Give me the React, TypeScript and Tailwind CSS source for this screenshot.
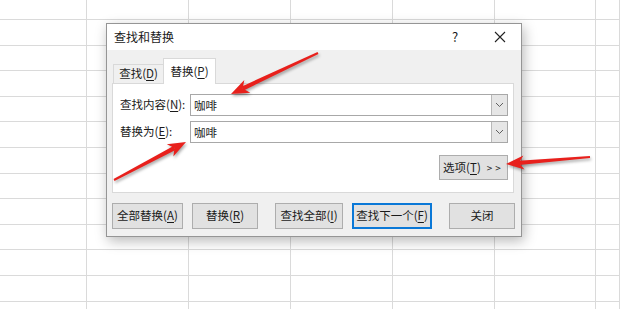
import type { ReactNode } from "react";

const FONT = { fontFamily: '"Noto Sans CJK SC", "Noto Sans", sans-serif' };

function Key({ k }: { k: string }) {
  return (
    <>
      (<span className="underline underline-offset-2">{k}</span>)
    </>
  );
}

function Arrow({ from, to }: { from: [number, number]; to: [number, number] }) {
  const dx = to[0] - from[0];
  const dy = to[1] - from[1];
  const len = Math.hypot(dx, dy);
  const ux = dx / len;
  const uy = dy / len;
  const nx = -uy;
  const ny = ux;
  const back = 18;
  const half = 7;
  const notch = 13;
  const bx = to[0] - back * ux;
  const by = to[1] - back * uy;
  const head = [
    [to[0], to[1]],
    [bx + half * nx, by + half * ny],
    [to[0] - notch * ux, to[1] - notch * uy],
    [bx - half * nx, by - half * ny],
  ]
    .map((p) => p.join(","))
    .join(" ");
  const sx = to[0] - notch * ux;
  const sy = to[1] - notch * uy;
  // tapered shaft: thin at the tail, thicker near the head
  const shaft = [
    [from[0] + 1 * nx, from[1] + 1 * ny],
    [sx + 2.2 * nx, sy + 2.2 * ny],
    [sx - 2.2 * nx, sy - 2.2 * ny],
    [from[0] - 1 * nx, from[1] - 1 * ny],
  ]
    .map((p) => p.join(","))
    .join(" ");
  return (
    <g fill="#e8201c" style={{ filter: "drop-shadow(1px 2px 1.5px rgba(0,0,0,0.35))" }}>
      <polygon points={shaft} />
      <polygon points={head} />
    </g>
  );
}

function Btn({ children, w, focus }: { children: ReactNode; w: string; focus?: boolean }) {
  return (
    <div
      className={
        "h-[26px] flex items-center justify-center bg-[#e1e1e1] text-[11.5px] text-[#1a1a1a] " +
        w +
        (focus ? " border-2 border-[#0a78d7]" : " border border-[#adadad]")
      }
    >
      {children}
    </div>
  );
}

function Combo({ value }: { value: string }) {
  return (
    <div className="h-[22px] w-[318px] flex border border-[#a8a8a8] bg-white">
      <div className="flex-1 pl-[3px] pt-[1px] text-[11.5px] leading-[18px] text-[#1a1a1a]">{value}</div>
      <div className="w-[16px] border-l border-[#b8b8b8] bg-[#e6e6e6] flex items-center justify-center">
        <svg width="9" height="6" viewBox="0 0 9 6">
          <polyline points="1,1 4.5,4.5 8,1" fill="none" stroke="#606060" strokeWidth="1" />
        </svg>
      </div>
    </div>
  );
}

export default function App() {
  const rows = Array.from({ length: 13 });
  const cols = Array.from({ length: 7 });

  return (
    <div className="relative w-[620px] h-[309px] overflow-hidden bg-white" style={FONT}>
      {/* spreadsheet grid behind the dialog */}
      <div className="grid grid-cols-[87px_102px_102px_102px_102px_101px_1fr] grid-rows-[20px_repeat(12,25.6px)]">
        {rows.map((_, r) =>
          cols.map((_, c) => <div key={r + "-" + c} className="border-r border-b border-[#dadada]" />)
        )}
      </div>

      {/* find & replace dialog */}
      <div className="absolute left-[106px] top-[23px] w-[416px] h-[214px] flex flex-col border border-[#959595] bg-[#f0f0f0] shadow-[2px_4px_12px_rgba(0,0,0,0.28)]">
        <div className="h-[26px] bg-white flex items-center pl-[7px] text-[12px] text-[#1a1a1a]">
          <span className="flex-1">查找和替换</span>
          <span className="w-[12px] text-[13px] mr-[30px]">?</span>
          <svg width="12" height="12" viewBox="0 0 12 12" className="mr-[15px]">
            <path d="M1 1 L11 11 M11 1 L1 11" stroke="#222" strokeWidth="1.1" />
          </svg>
        </div>

        <div className="flex-1 pl-[5px] pt-[8px]">
          {/* tabs */}
          <div className="flex items-end h-[25px] pl-[1px]">
            <div className="w-[50px] h-[19px] flex items-center justify-center border-t border-l border-[#d9d9d9] text-[11.5px] text-[#1a1a1a]">
              查找<Key k="D" />
            </div>
            <div className="w-[53px] h-[26px] -mb-px relative z-10 flex items-center justify-center bg-white border-t border-l border-r border-[#d9d9d9] text-[11.5px] text-[#1a1a1a]">
              替换<Key k="P" />
            </div>
          </div>

          {/* tab panel */}
          <div className="w-[402px] h-[110px] bg-white border border-[#d9d9d9] pt-[10px] pl-[7px]">
            <div className="flex items-center text-[11.5px] text-[#1a1a1a]">
              <span className="w-[70px]">
                查找内容<Key k="N" />:
              </span>
              <Combo value="咖啡" />
            </div>
            <div className="flex items-center mt-[5px] text-[11.5px] text-[#1a1a1a]">
              <span className="w-[70px]">
                替换为<Key k="E" />:
              </span>
              <Combo value="咖啡" />
            </div>
            <div className="flex justify-end pr-[5px] mt-[12px]">
              <div className="w-[69px] h-[25px] flex items-center justify-center gap-[6px] bg-[#e1e1e1] border border-[#adadad] text-[11.5px] text-[#1a1a1a]">
                <span>
                  选项<Key k="T" />
                </span>
                <span className="text-[10px] tracking-[3px]">&gt;&gt;</span>
              </div>
            </div>
          </div>

          {/* action buttons */}
          <div className="flex mt-[10px]">
            <Btn w="w-[71px]">
              全部替换<Key k="A" />
            </Btn>
            <div className="w-[9px]" />
            <Btn w="w-[66px]">
              替换<Key k="R" />
            </Btn>
            <div className="w-[17px]" />
            <Btn w="w-[68px]">
              查找全部<Key k="I" />
            </Btn>
            <div className="w-[9px]" />
            <Btn w="w-[80px]" focus>
              查找下一个<Key k="F" />
            </Btn>
            <div className="w-[17px]" />
            <Btn w="w-[66px]">关闭</Btn>
          </div>
        </div>
      </div>

      {/* red annotation arrows */}
      <svg className="absolute inset-0 pointer-events-none" width="620" height="309">
        <Arrow from={[318, 53]} to={[231, 94]} />
        <Arrow from={[114, 180]} to={[186, 142]} />
        <Arrow from={[590, 157]} to={[506, 164]} />
      </svg>
    </div>
  );
}
